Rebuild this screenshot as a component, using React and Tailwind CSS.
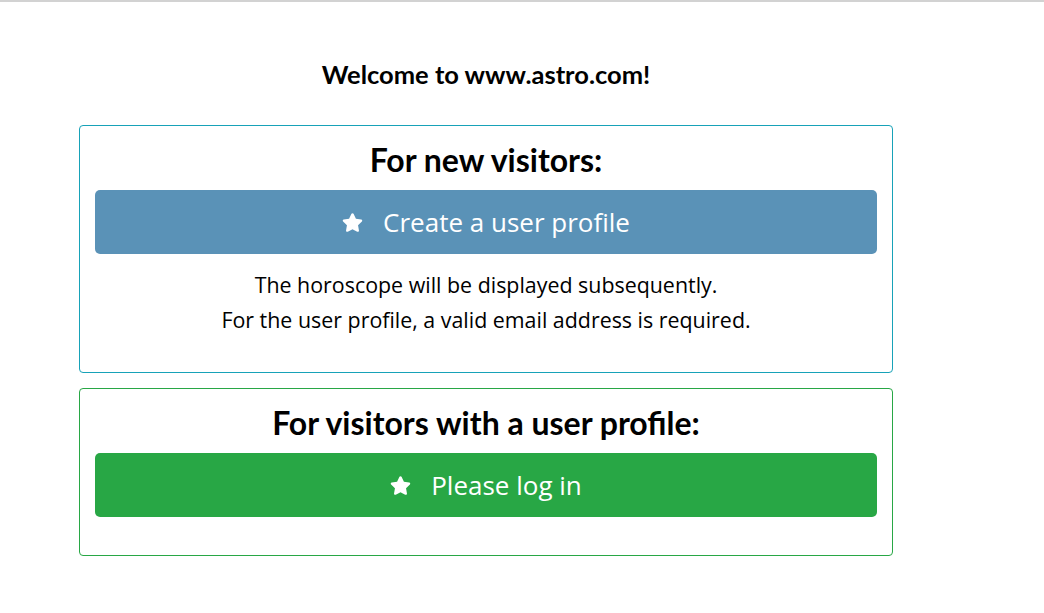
import { FaStar } from "react-icons/fa";

const head = { fontFamily: "Lato, 'Liberation Sans', sans-serif" };
const body = { fontFamily: "'Open Sans', 'Noto Sans', sans-serif" };

export default function App() {
  return (
    <div className="min-h-[613px] w-[1044px] bg-white border-t-2 border-[#d2d2d2]">
      <div className="ml-[79px] w-[814px] pt-[57px]">
        <h1
          className="text-center text-[25.5px] leading-[30px] font-bold text-black"
          style={head}
        >
          Welcome to www.astro.com!
        </h1>

        <div className="mt-[36px] border border-[#17a2b8] rounded-[4px] px-[15px] pt-[16px] pb-[35px]">
          <h2 className="text-center text-[32px] leading-[36px] font-bold text-black" style={head}>
            For new visitors:
          </h2>
          <Button color="bg-[#5a92b7]" label="Create a user profile" />
          <div className="mt-[13px] text-center text-[21.4px] leading-[35px] text-black" style={body}>
            <p>The horoscope will be displayed subsequently.</p>
            <p>For the user profile, a valid email address is required.</p>
          </div>
        </div>

        <div className="mt-[15px] border border-[#28a745] rounded-[4px] px-[15px] pt-[16px] pb-[38px]">
          <h2 className="text-center text-[32px] leading-[36px] font-bold text-black" style={head}>
            For visitors with a user profile:
          </h2>
          <Button color="bg-[#28a745]" label="Please log in" />
        </div>
      </div>
    </div>
  );
}

function Button({ color, label }) {
  return (
    <button
      className={`mt-[12px] w-full h-[64px] ${color} rounded-[5px] flex items-center justify-center gap-[20px] text-white text-[26px]`}
      style={body}
    >
      <FaStar className="w-[21px] h-[21px]" />
      <span>{label}</span>
    </button>
  );
}
